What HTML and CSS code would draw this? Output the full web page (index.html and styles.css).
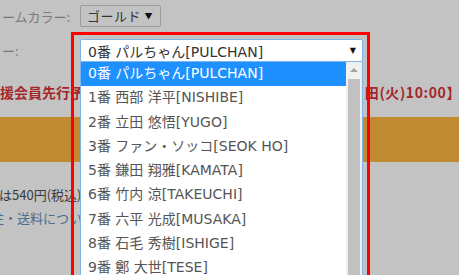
FILE: index.html
```html
<!DOCTYPE html>
<html lang="ja">
<head>
<meta charset="utf-8">
<title>選手選択</title>
<meta name="viewport" content="width=device-width, initial-scale=1">
<link rel="stylesheet" href="styles.css">
</head>
<body>
<div class="page">
	<div class="row row_color">
		<span class="label">ームカラー:</span>
		<span class="mini_select">ゴールド <span class="tri">&#9660;</span></span>
	</div>
	<div class="row row_player">
		<span class="label">ー:</span>
	</div>
	<div class="notice">
		<span>援会員先行予約受付開始</span>
		<span class="notice_end">田(火)10:00】</span>
	</div>
	<div class="band"></div>
	<p class="price">は540円(税込)です。</p>
	<p class="shipping">注・送料について</p>
</div>

<!-- opened select, highlighted by the red frame -->
<div class="popup">
	<div class="sel">
		<span>0番 パルちゃん[PULCHAN]</span>
		<span class="tri">&#9660;</span>
	</div>
	<div class="list">
		<ul class="opts">
			<li class="on">0番 パルちゃん[PULCHAN]</li>
			<li>1番 西部 洋平[NISHIBE]</li>
			<li>2番 立田 悠悟[YUGO]</li>
			<li>3番 ファン・ソッコ[SEOK HO]</li>
			<li>5番 鎌田 翔雅[KAMATA]</li>
			<li>6番 竹内 涼[TAKEUCHI]</li>
			<li>7番 六平 光成[MUSAKA]</li>
			<li>8番 石毛 秀樹[ISHIGE]</li>
			<li>9番 鄭 大世[TESE]</li>
			<li>10番 白崎 凌兵[SHIRASAKI]</li>
		</ul>
		<div class="sbar">
			<div class="sbar_up"></div>
			<div class="sbar_thumb"></div>
		</div>
	</div>
</div>
</body>
</html>
```

FILE: styles.css
```css
body {
    margin: 0;
    background: #c3c3c3;
    font-family: "Noto Sans CJK JP", "Noto Sans", sans-serif;
    overflow: hidden;
    height: 275px;
}

.page { width: 459px; overflow: hidden; }

.row { display: flex; align-items: center; height: 22px; }
.row_color { margin-top: 5px; }
.row_player { margin-top: 12px; }
.label { width: 80px; padding-left: 2px; box-sizing: border-box; font-size: 13px; color: #7a7a7a; }

.mini_select {
    box-sizing: border-box;
    width: 81px;
    height: 22px;
    border: 1px solid #9a9a9a;
    border-radius: 2px;
    font-size: 13px;
    color: #333;
    padding-left: 6px;
    line-height: 20px;
    letter-spacing: 0.5px;
}
.tri { font-size: 8px; color: #111; vertical-align: 2px; }

.notice {
    display: flex;
    justify-content: space-between;
    margin-top: 20px;
    height: 22px;
    line-height: 22px;
    font-size: 14px;
    font-weight: bold;
    color: #a3272a;
    white-space: nowrap;
}
.notice_end { margin-right: -2px; letter-spacing: 0.6px; }

.band { margin-top: 14px; height: 45px; background: #c08a31; }

.price, .shipping { margin: 0; font-size: 13px; line-height: 22px; white-space: nowrap; }
.price { margin-top: 22px; color: #3a3a3a; margin-left: -1px; }
.shipping { margin-top: 1px; color: #4a6e92; margin-left: -9px; }

.popup {
    position: absolute;
    left: 71px;
    top: 32px;
    width: 299px;
    height: 260px;
    box-sizing: border-box;
    border: 3px solid #f00;
    padding: 4px 4px 0 6px;
    font-family: "DejaVu Sans", "Noto Sans CJK JP", sans-serif;
}

.sel {
    box-sizing: border-box;
    height: 23px;
    background: #fff;
    border: 1px solid #7eb4ea;
    border-radius: 2px;
    display: flex;
    justify-content: space-between;
    align-items: center;
    padding: 0 6px 0 7px;
    font-size: 14px;
    color: #333;
}

.list {
    display: flex;
    background: #fff;
    border-left: 1px solid #7eb4ea;
    border-right: 1px solid #7eb4ea;
    height: 240px;
}

.opts { flex: 1; margin: 0; padding: 0; list-style: none; overflow: hidden; }
.opts li {
    height: 24.25px;
    line-height: 23px;
    padding-left: 7px;
    font-size: 14px;
    color: #555;
    white-space: nowrap;
}
.opts li.on { background: #1e90ff; color: #fff; }

.sbar {
    width: 16px;
    background: #f0f0f0;
    display: flex;
    flex-direction: column;
    align-items: center;
}
.sbar_up {
    margin-top: 6px;
    width: 0;
    height: 0;
    border-left: 4px solid transparent;
    border-right: 4px solid transparent;
    border-bottom: 4px solid #a3a3a3;
}
.sbar_thumb { margin-top: 7px; width: 12px; flex: 1; background: #c1c1c1; }
```
